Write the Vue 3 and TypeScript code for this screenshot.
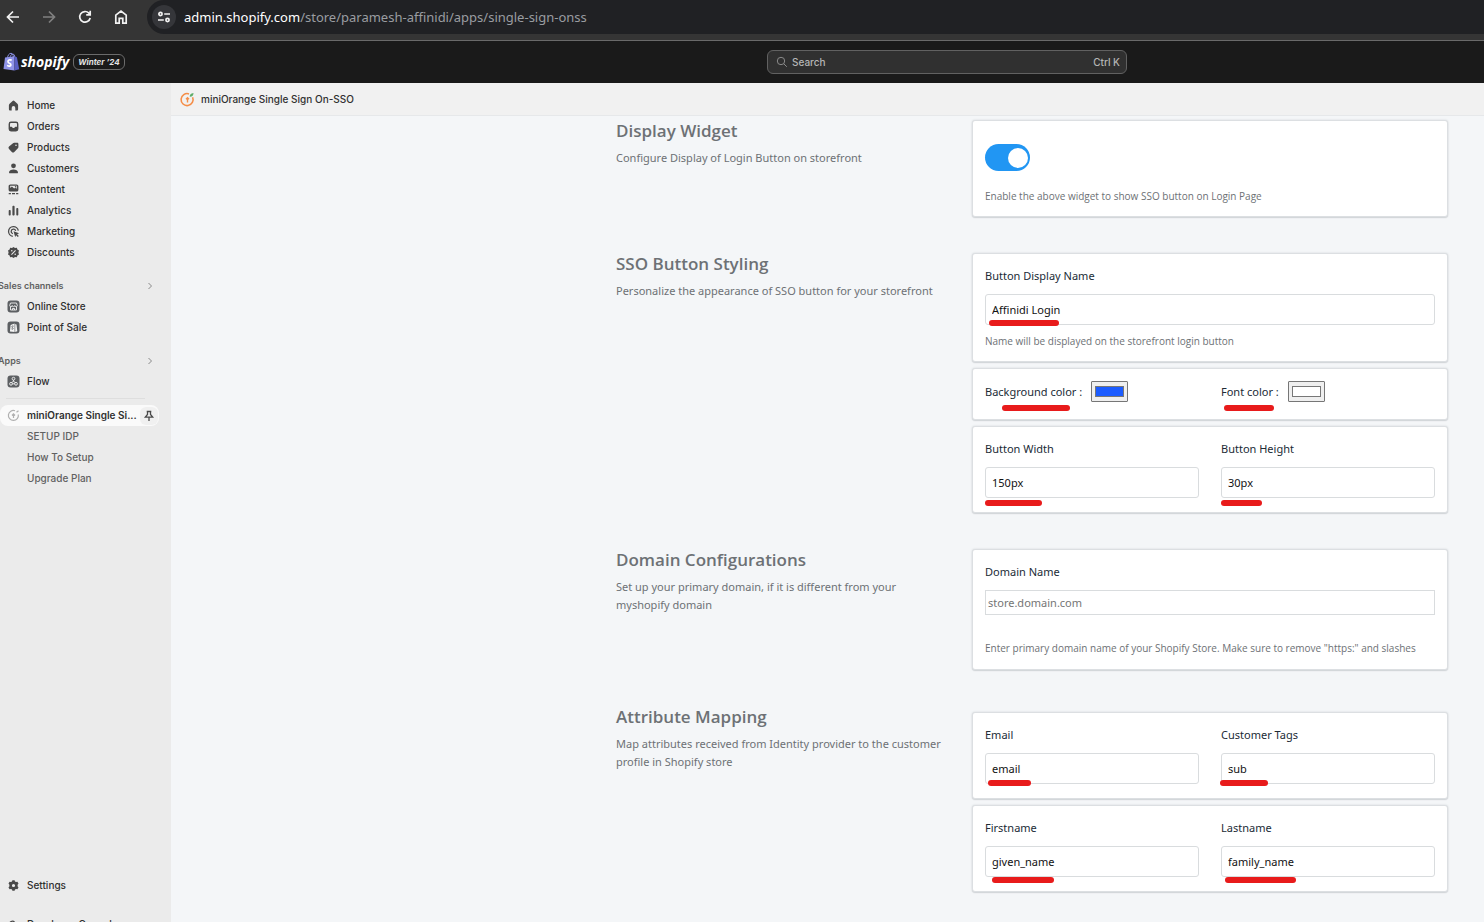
<script setup lang="ts">
import { ref } from 'vue'

interface Mark {
  x: number
  y: number
  w: number
}
interface Field {
  id: string
  label: string
  value: string
  mark: Mark
}

const icons: Record<string, string> = {
  home: 'M6.6 2.9a1.3 1.3 0 0 1 1.8 0L11.4 5.7c.4.4.7.9.7 1.5v3.7c0 1-.6 1.5-1.4 1.5H9.3V9.9a1.8 1.8 0 0 0-3.6 0v2.5H4.3c-.8 0-1.4-.5-1.4-1.5V7.2c0-.6.3-1.1.7-1.5z',
  orders:
    'M5 2.6h5A2.4 2.4 0 0 1 12.4 5v5a2.4 2.4 0 0 1-2.4 2.4H5A2.4 2.4 0 0 1 2.6 10V5A2.4 2.4 0 0 1 5 2.6zM5.2 4C4.5 4 4 4.4 4 5.1v2.6h1.5c.4 0 .7.3.9.7.2.4.5.6 1.1.6s.9-.2 1.1-.6c.2-.4.5-.7.9-.7H11V5.1C11 4.4 10.5 4 9.8 4z',
  products:
    'M8.2 2.7h3c.7 0 1.2.5 1.2 1.2v3c0 .5-.2 1-.5 1.3l-3.6 3.7a1.8 1.8 0 0 1-2.5 0L3 9.1a1.8 1.8 0 0 1 0-2.5l4-3.4c.3-.3.7-.5 1.2-.5zM10 4.4a.8.8 0 1 0 0 1.6.8.8 0 0 0 0-1.6z',
  customers:
    'M7.5 2.4a2.4 2.4 0 1 1 0 4.8 2.4 2.4 0 0 1 0-4.8zM3 11.4c0-1.9 2-3 4.5-3s4.5 1.1 4.5 3c0 .6-.4.9-1 .9H4c-.6 0-1-.3-1-.9z',
  content:
    'M4.4 2.4h6.2c1 0 1.8.8 1.8 1.8v3.6c0 1-.8 1.8-1.8 1.8H4.4c-1 0-1.8-.8-1.8-1.8V4.2c0-1 .8-1.8 1.8-1.8zM4.2 3.7v2.2l1.7-1.3 2.2 1.9 1.2-.8 1.5 1V3.7zM9.5 4.1a.7.7 0 1 1 0 1.4.7.7 0 0 1 0-1.4zM2.7 11h2.2v1.3H2.7zM6 11h3v1.3H6zM10.1 11h2.2v1.3h-2.2z',
  analytics:
    'M3.7 7c.6 0 1 .4 1 1v3.4c0 .6-.4 1-1 1s-1-.4-1-1V8c0-.6.4-1 1-1zM7.5 2.7c.6 0 1.1.4 1.1 1v7.7c0 .6-.5 1-1.1 1s-1.1-.4-1.1-1V3.7c0-.6.5-1 1.1-1zM11.3 5.1c.6 0 1 .4 1 1v5.3c0 .6-.4 1-1 1s-1-.4-1-1V6.1c0-.6.4-1 1-1z',
  discounts:
    'M7.5 1.9l1.5 1 1.9-.1.5 1.6 1.6 1.200-.6 1.900.6 1.900-1.600 1.200-.5 1.600-1.900-.1-1.500 1-1.500-1-1.900.1-.5-1.600L2 9.400l.6-1.900L2 5.600l1.600-1.200.5-1.600 1.900.1zM5.800 4.900a.8.8 0 1 0 0 1.600.8.8 0 0 0 0-1.600zM9.200 5.100L5.100 9.200l.7.7L9.900 5.800zM9.200 8.500a.8.8 0 1 0 0 1.600.8.8 0 0 0 0-1.600z',
  settings:
    'M6.400 2.200h2.200l.4 1.300 1 .5 1.400-.3 1.100 1.900-.9 1.100v1.600l.9 1.100-1.100 1.900-1.400-.3-1 .5-.4 1.300H6.400L6 11.500l-1-.5-1.400.3L2.500 9.400l.9-1.100V6.700l-.9-1.100 1.100-1.900L5 4l1-.5zM7.500 5.900a1.600 1.600 0 1 0 0 3.200 1.600 1.600 0 0 0 0-3.200z',
}

const navItems = [
  { label: 'Home', icon: 'home' },
  { label: 'Orders', icon: 'orders' },
  { label: 'Products', icon: 'products' },
  { label: 'Customers', icon: 'customers' },
  { label: 'Content', icon: 'content' },
  { label: 'Analytics', icon: 'analytics' },
  { label: 'Marketing', icon: 'marketing' },
  { label: 'Discounts', icon: 'discounts' },
]
const subItems = ['SETUP IDP', 'How To Setup', 'Upgrade Plan']

const widgetOn = ref(true)
const displayName = ref('Affinidi Login')
const domain = ref('')

const colors = ref([
  { id: 'bg-color', label: 'Background color :', value: '#1c5cff', mark: { x: 17, y: 24, w: 68 } },
  { id: 'font-color', label: 'Font color :', value: '#ffffff', mark: { x: 3, y: 24, w: 50 } },
])
const sizes = ref<Field[]>([
  { id: 'btn-width', label: 'Button Width', value: '150px', mark: { x: 0, y: 33, w: 57 } },
  { id: 'btn-height', label: 'Button Height', value: '30px', mark: { x: 0, y: 33, w: 41 } },
])
const attributes = ref<Field[][]>([
  [
    { id: 'email', label: 'Email', value: 'email', mark: { x: 3, y: 27, w: 43 } },
    { id: 'tags', label: 'Customer Tags', value: 'sub', mark: { x: -1, y: 27, w: 48 } },
  ],
  [
    { id: 'first', label: 'Firstname', value: 'given_name', mark: { x: 7, y: 31, w: 62 } },
    { id: 'last', label: 'Lastname', value: 'family_name', mark: { x: 4, y: 31, w: 71 } },
  ],
])

const markStyle = (m: Mark) => ({ left: `${m.x}px`, top: `${m.y}px`, width: `${m.w}px` })
</script>

<template>
  <div class="app">
    <div class="browser">
      <button class="tool" aria-label="Back">
        <svg viewBox="0 0 16 16"><path d="M14 8H2.800M8 2.500L2.500 8 8 13.500" /></svg>
      </button>
      <button class="tool dim" aria-label="Forward">
        <svg viewBox="0 0 16 16"><path d="M2 8h11.200M8 2.500L13.500 8 8 13.500" /></svg>
      </button>
      <button class="tool" aria-label="Reload">
        <svg viewBox="0 0 16 16"><path d="M13.200 9a5.300 5.300 0 1 1-1.300-4.800L13 5.300M13.200 1.800v4H9.200" /></svg>
      </button>
      <button class="tool" aria-label="Homepage">
        <svg viewBox="0 0 16 16"><path d="M2.800 6.200L8 2l5.200 4.200v8H9.800V9.400H6.200v4.800H2.800z" /></svg>
      </button>
      <div class="address">
        <button class="site-info" aria-label="Site information">
          <svg viewBox="0 0 16 16">
            <circle cx="4.500" cy="5" r="1.600" /><path d="M8.200 5H14M2 11h5.800" /><circle cx="11.500" cy="11" r="1.600" />
          </svg>
        </button>
        <span class="url"><b>admin.shopify.com</b>/store/paramesh-affinidi/apps/single-sign-onss</span>
      </div>
    </div>

    <header class="topbar">
      <div class="brand">
        <svg class="bag" viewBox="0 0 17 20">
          <path d="M4.500 6C4.700 3.300 6.200 1.300 8 1.300S10.300 3 10.300 5M7 5.500c.2-2 1.500-3.300 3-3.300 1 0 1.800 1 1.800 3" fill="none" stroke="#8a8fe0" />
          <path d="M2 5.600l9.500-1.300v14.200L.5 17z" fill="#8f93e8" />
          <path d="M11.500 4.300l2.400 1 2.300 11.900-4.700 1.300z" fill="#5a5fc4" />
          <path d="M8.700 8.300C6.500 7.300 4.900 8.300 5 9.700c.1 1.700 2.900 1.500 2.900 3.200 0 1.300-1.900 1.700-3.800.5" fill="none" stroke="#fff" stroke-width="1.700" />
        </svg>
        <span class="wordmark">shopify</span>
        <span class="edition">Winter ’24</span>
      </div>
      <button class="search">
        <svg viewBox="0 0 12 12"><circle cx="5" cy="5" r="3.700" /><path d="M7.800 7.800L10.800 10.800" /></svg>
        <span>Search</span><kbd>Ctrl K</kbd>
      </button>
    </header>

    <div class="body">
      <aside class="sidebar">
        <nav class="nav" aria-label="Main">
          <a v-for="item in navItems" :key="item.label" class="row" href="#">
            <svg v-if="item.icon === 'marketing'" class="icon line" viewBox="0 0 15 15">
              <path d="M12.300 6.700A4.900 4.900 0 1 0 6.800 12.300M9.700 6.900A2.300 2.300 0 1 0 6.900 9.700" />
              <path class="solid" d="M7.500 7.300l5.600 1.900-2 1.100 1.700 1.700-1 1-1.700-1.700-.9 1.800z" />
            </svg>
            <svg v-else class="icon" viewBox="0 0 15 15"><path :d="icons[item.icon]" /></svg>
            <span>{{ item.label }}</span>
          </a>

          <button class="group">
            <span>Sales channels</span>
            <svg viewBox="0 0 8 8"><path d="M2.500 1l3 3-3 3" /></svg>
          </button>
          <a class="row" href="#">
            <svg class="icon" viewBox="0 0 15 15">
              <rect x="1.500" y="1.500" width="12" height="12" rx="3" fill="#5c5f62" />
              <path class="white" d="M4.500 4h6l.8 2.500c0 .8-.6 1.200-1.200 1.200s-1.300-.4-1.300-1.200c0 .8-.6 1.200-1.300 1.200s-1.300-.4-1.300-1.200c0 .8-.6 1.200-1.300 1.200s-1.200-.4-1.200-1.200zM4.500 8v3h6V8M6.500 11V9.500h2V11" />
            </svg>
            <span>Online Store</span>
          </a>
          <a class="row" href="#">
            <svg class="icon" viewBox="0 0 15 15">
              <rect x="1.500" y="1.500" width="12" height="12" rx="3" fill="#5c5f62" />
              <path d="M4.600 4.900l4-1.400v8.600L3.900 11.400zM9.200 3.900l1.300.7.800 6.700-2.100.7z" fill="#f4f4f4" />
              <path d="M7.500 6.200c-1-.4-1.700 0-1.700.6 0 .8 1.300.8 1.300 1.700 0 .7-.8.8-1.600.4" fill="none" stroke="#5c5f62" />
            </svg>
            <span>Point of Sale</span>
          </a>

          <button class="group">
            <span>Apps</span>
            <svg viewBox="0 0 8 8"><path d="M2.500 1l3 3-3 3" /></svg>
          </button>
          <a class="row" href="#">
            <svg class="icon" viewBox="0 0 15 15">
              <rect x="1.500" y="1.500" width="12" height="12" rx="3" fill="#5c5f62" />
              <g class="white">
                <circle cx="7.500" cy="4.700" r="1.400" /><circle cx="5" cy="9.800" r="1.400" /><circle cx="10" cy="9.800" r="1.400" />
                <path d="M7.500 6.100v1.300L5.600 8.500M7.500 7.400l1.900 1.100M6.400 9.800h2.200" />
              </g>
            </svg>
            <span>Flow</span>
          </a>
          <hr class="rule" />
          <div class="active">
            <a class="row" href="#" aria-current="page">
              <svg class="icon ring" viewBox="0 0 15 15">
                <path d="M12.300 6.500A5 5 0 1 1 9 2.700M7.500 10V6.200M6 7.500l1.500-1.600L9 7.500" />
                <path d="M10.500 4.300l2-1.600" />
              </svg>
              <span>miniOrange Single Si...</span>
            </a>
            <button class="pin" aria-label="Unpin">
              <svg viewBox="0 0 12 12"><path d="M3.700 1.500h4.600M4.500 1.500v3L2.300 7.200h7.400L7.500 4.500v-3M6 7.500V11" /></svg>
            </button>
          </div>
          <a v-for="s in subItems" :key="s" class="sub" href="#">{{ s }}</a>
        </nav>
        <div class="foot">
          <a class="row" href="#">
            <svg class="icon" viewBox="0 0 15 15"><path :d="icons.settings" /></svg>
            <span>Settings</span>
          </a>
          <a class="row" href="#">
            <svg class="icon line" viewBox="0 0 15 15"><path d="M3.500 7.500a3 3 0 0 1 5-2.500M7.500 5.500a2 2 0 1 1-2 2" /></svg>
            <span>Developer Console</span>
          </a>
        </div>
      </aside>

      <main class="main">
        <div class="app-title">
          <svg viewBox="0 0 15 15">
            <path d="M12.600 5.200A6 6 0 1 1 9 1.900" fill="none" stroke="#f58d47" stroke-width="1.600" />
            <path d="M7.500 10.400V6.500M6 7.300l1.500-1.500L9 7.300" fill="none" stroke="#f58d47" stroke-width="1.400" />
            <path d="M9.800 4.800c-.2-2 .9-3.500 3.700-3.700 0 2.300-1.300 3.800-3.700 3.700z" fill="#5fae6a" />
          </svg>
          <span>miniOrange Single Sign On-SSO</span>
        </div>

        <div class="content">
          <section class="section">
            <div class="intro">
              <h2>Display Widget</h2>
              <p>Configure Display of Login Button on storefront</p>
            </div>
            <div class="cards">
              <div class="card widget">
                <label class="switch">
                  <input v-model="widgetOn" type="checkbox" aria-label="Display login button" />
                </label>
                <p class="help">Enable the above widget to show SSO button on Login Page</p>
              </div>
            </div>
          </section>

          <section class="section">
            <div class="intro">
              <h2>SSO Button Styling</h2>
              <p>Personalize the appearance of SSO button for your storefront</p>
            </div>
            <div class="cards">
              <div class="card named">
                <div class="field">
                  <label for="display-name">Button Display Name</label>
                  <div class="control">
                    <input id="display-name" v-model="displayName" class="text" type="text" />
                    <span class="mark" :style="markStyle({ x: 4, y: 26, w: 70 })"></span>
                  </div>
                </div>
                <p class="help">Name will be displayed on the storefront login button</p>
              </div>
              <div class="card swatches pair">
                <div v-for="c in colors" :key="c.id" class="swatch">
                  <label :for="c.id">{{ c.label }}</label>
                  <input :id="c.id" v-model="c.value" type="color" />
                  <span class="mark" :style="markStyle(c.mark)"></span>
                </div>
              </div>
              <div class="card pair">
                <div v-for="f in sizes" :key="f.id" class="field">
                  <label :for="f.id">{{ f.label }}</label>
                  <div class="control">
                    <input :id="f.id" v-model="f.value" class="text" type="text" />
                    <span class="mark" :style="markStyle(f.mark)"></span>
                  </div>
                </div>
              </div>
            </div>
          </section>

          <section class="section">
            <div class="intro">
              <h2>Domain Configurations</h2>
              <p>Set up your primary domain, if it is different from your myshopify domain</p>
            </div>
            <div class="cards">
              <div class="card domain">
                <div class="field">
                  <label for="domain">Domain Name</label>
                  <input id="domain" v-model="domain" class="text plain" type="text" placeholder="store.domain.com" />
                </div>
                <p class="help">
                  Enter primary domain name of your Shopify Store. Make sure to remove "https:" and slashes
                </p>
              </div>
            </div>
          </section>

          <section class="section">
            <div class="intro">
              <h2>Attribute Mapping</h2>
              <p>Map attributes received from Identity provider to the customer profile in Shopify store</p>
            </div>
            <div class="cards lowered">
              <div v-for="(group, i) in attributes" :key="i" class="card pair">
                <div v-for="f in group" :key="f.id" class="field">
                  <label :for="f.id">{{ f.label }}</label>
                  <div class="control">
                    <input :id="f.id" v-model="f.value" class="text" type="text" />
                    <span class="mark" :style="markStyle(f.mark)"></span>
                  </div>
                </div>
              </div>
            </div>
          </section>
        </div>
      </main>
    </div>
  </div>
</template>

<style>
body {
  margin: 0;
}
</style>

<style scoped>
*,
*::before {
  box-sizing: border-box;
}
.app {
  height: 100vh;
  display: flex;
  flex-direction: column;
  overflow: hidden;
  font-family: Inter, 'Liberation Sans', sans-serif;
  font-size: 10px;
  color: #303030;
}
button {
  border: 0;
  padding: 0;
  background: none;
  font: inherit;
  color: inherit;
  cursor: pointer;
}
a {
  color: inherit;
  text-decoration: none;
}
h2,
p {
  margin: 0;
}
svg {
  flex: none;
}

/* Browser bar */
.browser {
  flex: none;
  display: flex;
  align-items: flex-start;
  gap: 20px;
  height: 41px;
  padding-left: 5px;
  background: #353535;
  border-bottom: 1px solid #6a6a6a;
}
.tool {
  display: flex;
  align-items: center;
  width: 16px;
  height: 34px;
}
.tool svg,
.site-info svg {
  width: 16px;
  height: 16px;
  fill: none;
  stroke: #f2f2f2;
  stroke-width: 1.7;
}
.tool.dim svg {
  stroke: #808080;
}
.address {
  flex: 1;
  display: flex;
  align-items: center;
  gap: 8px;
  height: 34px;
  margin-left: -2px;
  padding-left: 5px;
  background: #202124;
  border-radius: 17px 0 0 17px;
}
.site-info {
  display: flex;
  align-items: center;
  justify-content: center;
  width: 24px;
  height: 24px;
  border-radius: 12px;
  background: #35363a;
}
.url {
  font: 13px/20px 'Noto Sans', 'Open Sans', sans-serif;
  color: #9a9da1;
  white-space: nowrap;
}
.url b {
  font-weight: 400;
  color: #fff;
}

/* Top bar */
.topbar {
  flex: none;
  display: grid;
  grid-template-columns: minmax(0, 767fr) 360px minmax(0, 357fr);
  align-items: center;
  height: 42px;
  background: #1a1a1a;
}
.brand {
  display: flex;
  align-items: center;
  padding-left: 3px;
}
.bag {
  width: 17px;
  height: 20px;
}
.wordmark {
  margin-left: 1px;
  font: italic 700 14px/20px 'Open Sans', sans-serif;
  color: #fff;
}
.edition {
  margin-left: 4px;
  padding: 0 4px;
  border: 1px solid #6b6b6b;
  border-radius: 6px;
  font: italic 700 8px/14px Inter, sans-serif;
  color: #e3e3e3;
}
.search {
  display: flex;
  align-items: center;
  gap: 4px;
  height: 24px;
  padding: 0 6px 0 8px;
  border: 1px solid #616161;
  border-radius: 6px;
  background: #303030;
  color: #b5b5b5;
  font-weight: 500;
}
.search svg {
  width: 12px;
  height: 12px;
  fill: none;
  stroke: #8a8a8a;
}
.search kbd {
  margin-left: auto;
  font: inherit;
}

/* Sidebar */
.body {
  flex: 1;
  display: flex;
  min-height: 0;
}
.sidebar {
  flex: none;
  display: flex;
  flex-direction: column;
  justify-content: space-between;
  width: 171px;
  background: #ebebeb;
}
.nav {
  display: flex;
  flex-direction: column;
  padding-top: 12px;
}
.row {
  display: flex;
  align-items: center;
  gap: 6px;
  height: 21px;
  padding-left: 6px;
  line-height: 21px;
  font-weight: 500;
  white-space: nowrap;
}
.icon {
  width: 15px;
  height: 15px;
  fill: #4a4a4a;
  fill-rule: evenodd;
}
.icon.line {
  fill: none;
  stroke: #4a4a4a;
  stroke-width: 1.3;
}
.icon .solid {
  fill: #4a4a4a;
  stroke: none;
}
.icon .white {
  fill: none;
  stroke: #f4f4f4;
  stroke-width: 0.9;
}
.icon.ring {
  fill: none;
  stroke: #b0b0b0;
  stroke-width: 1.2;
}
.group {
  display: flex;
  align-items: center;
  justify-content: space-between;
  height: 21px;
  margin: 12px 17px 0 -2px;
  font-size: 9px;
  font-weight: 600;
  color: #616161;
}
.group svg {
  width: 8px;
  height: 8px;
  fill: none;
  stroke: #8a8a8a;
}
.rule {
  width: 139px;
  height: 1px;
  margin: 6px 0 6px 6px;
  border: 0;
  background: #dedede;
}
.active {
  display: flex;
  align-items: center;
  width: 159px;
  background: #fafafa;
  border-radius: 8px;
}
.active .row {
  flex: 1;
  min-width: 0;
  font-weight: 600;
}
.pin {
  display: flex;
  align-items: center;
  justify-content: center;
  width: 18px;
  height: 18px;
  margin-right: 1px;
  border-radius: 6px;
  background: #f0f0f0;
}
.pin svg {
  width: 12px;
  height: 12px;
  fill: none;
  stroke: #4a4a4a;
  stroke-width: 1.3;
}
.sub {
  height: 21px;
  padding-left: 27px;
  line-height: 21px;
  color: #616161;
  font-weight: 500;
}
.foot {
  flex: none;
  display: flex;
  flex-direction: column;
  gap: 18px;
  height: 47px;
  overflow: hidden;
}
.foot .row {
  flex: none;
}

/* Main */
.main {
  flex: 1;
  display: flex;
  flex-direction: column;
  min-width: 0;
  background: #f4f6f8;
}
.app-title {
  flex: none;
  display: flex;
  align-items: center;
  gap: 6px;
  height: 33px;
  padding-left: 9px;
  background: #f1f1f1;
  border-bottom: 1px solid #e6e8ea;
  font-weight: 500;
}
.app-title svg {
  width: 15px;
  height: 15px;
}
.content {
  flex: 1;
  display: flex;
  flex-direction: column;
  gap: 36px;
  padding: 4px 36px 0 12px;
  overflow: hidden;
  font-family: 'Noto Sans', 'Open Sans', sans-serif;
  font-size: 11px;
  line-height: 18px;
}
.section {
  display: grid;
  grid-template-columns: 336px minmax(0, 476px);
  gap: 20px;
  justify-content: end;
}
.intro {
  color: #6d7175;
}
.intro h2 {
  margin-bottom: 7px;
  font: 600 17px/22px 'Open Sans', 'Noto Sans', sans-serif;
}
.cards {
  display: flex;
  flex-direction: column;
  gap: 6px;
}
.cards.lowered {
  padding-top: 6px;
}
.card {
  padding: 13px 12px 14px;
  border: 1px solid #dcdfe2;
  border-radius: 3px;
  background: #fff;
  box-shadow: 0 0 2px #cfd2d5, 0 1px 1px #d3d6d9;
}
.pair {
  display: grid;
  grid-template-columns: 1fr 1fr;
  gap: 22px;
}
.field {
  display: flex;
  flex-direction: column;
  gap: 9px;
  min-width: 0;
}
label {
  color: #212b36;
}
.control {
  position: relative;
}
.text {
  display: block;
  width: 100%;
  height: 31px;
  padding: 0 6px;
  border: 1px solid #d9dcde;
  border-radius: 3px;
  background: #fff;
  font: inherit;
  color: #111;
}
.text.plain {
  height: 25px;
  padding: 0 2px;
  border-radius: 0;
}
.text::placeholder {
  color: #757575;
  opacity: 1;
}
.help {
  font: 10px/16px 'Open Sans', 'Noto Sans', sans-serif;
  color: #6d7175;
}
.widget {
  padding-top: 23px;
  padding-bottom: 12px;
}
.widget .help {
  margin-top: 17px;
}
.named {
  padding-bottom: 12px;
}
.named .help {
  margin-top: 8px;
}
.domain {
  padding-bottom: 13px;
}
.domain .help {
  margin-top: 25px;
}
.swatches {
  padding-top: 12px;
  padding-bottom: 17px;
}
.swatch {
  position: relative;
  display: flex;
  align-items: center;
  gap: 9px;
}
.swatch input {
  appearance: none;
  width: 37px;
  height: 21px;
  margin: 0;
  padding: 0;
  border: 1px solid #767676;
  border-radius: 1px;
  background: #efefef;
}
.swatch input::-webkit-color-swatch-wrapper {
  padding: 4px 3px;
}
.swatch input::-webkit-color-swatch {
  border: 1px solid #777;
  border-radius: 0;
}
.switch {
  display: block;
  height: 27px;
}
.switch input {
  appearance: none;
  display: block;
  width: 45px;
  height: 27px;
  margin: 0;
  padding: 4px 2px 3px 3px;
  border-radius: 14px;
  background: #ccc;
  cursor: pointer;
}
.switch input::before {
  content: '';
  display: block;
  width: 20px;
  height: 20px;
  border-radius: 50%;
  background: #fff;
}
.switch input:checked {
  background: #2196f3;
}
.switch input:checked::before {
  margin-left: auto;
}
.mark {
  position: absolute;
  height: 6px;
  border-radius: 3px;
  background: #e81b1b;
  pointer-events: none;
}
</style>
